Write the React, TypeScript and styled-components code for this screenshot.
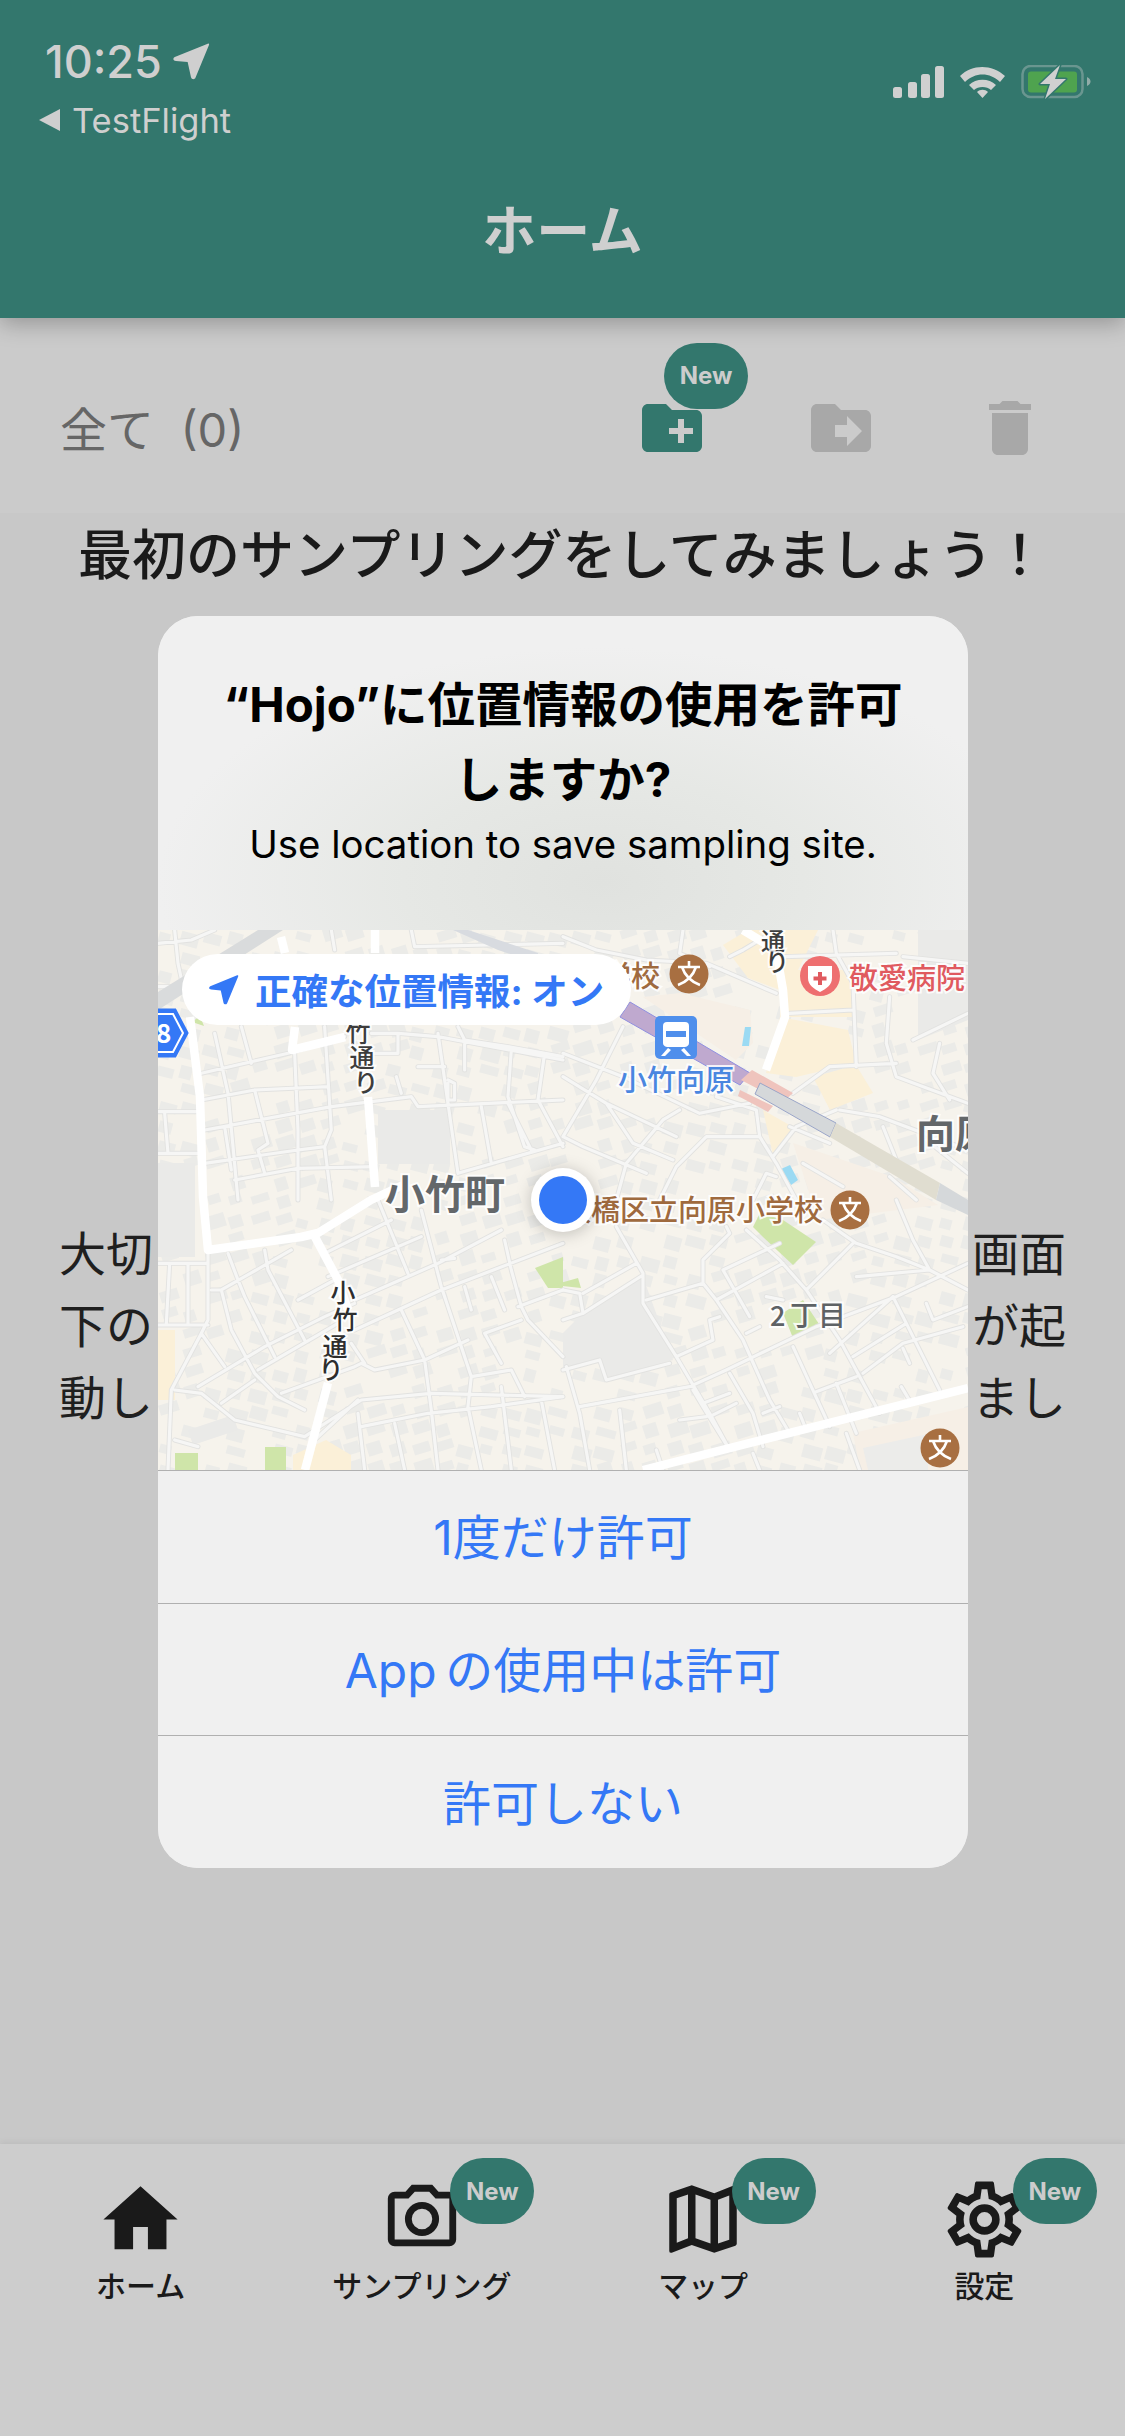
import React from 'react';
import styled, { createGlobalStyle } from 'styled-components';

const GREEN = '#33776d';
const BLUE = '#3478f6';
const BROWN = '#a86f41';

const GlobalStyle = createGlobalStyle`
  html, body {
    margin: 0;
    padding: 0;
    background: #c8c8c8;
  }
  * {
    box-sizing: border-box;
  }
`;

const Page = styled.div`
  position: relative;
  display: flex;
  flex-direction: column;
  width: 1125px;
  height: 2436px;
  overflow: hidden;
  background: #c8c8c8;
  font-family: Inter, 'Noto Sans CJK JP', sans-serif;
`;

const Header = styled.header`
  position: relative;
  z-index: 2;
  flex: none;
  height: 318px;
  background: ${GREEN};
  color: #cfcfcf;
  box-shadow: 0 5px 22px rgba(0, 0, 0, 0.28);
`;

const StatusRow = styled.div`
  display: flex;
  justify-content: space-between;
  height: 197px;
  padding: 36px 34px 0 38px;
`;

const Clock = styled.div`
  display: flex;
  align-items: center;
  gap: 10px;
  height: 50px;
  padding-left: 7px;
  font-size: 45px;
  font-weight: 500;
`;

const BackLink = styled.div`
  display: flex;
  align-items: center;
  gap: 12px;
  height: 40px;
  margin-top: 14px;
  font-size: 34.5px;
`;

const StatusIcons = styled.svg`
  margin-top: 29px;
`;

const HeaderTitle = styled.h1`
  margin: 0;
  font-size: 54px;
  font-weight: 600;
  line-height: 70px;
  text-align: center;
`;

const Toolbar = styled.div`
  flex: none;
  display: flex;
  align-items: center;
  justify-content: space-between;
  height: 195px;
  padding: 22px 79px 0 60px;
  background: #cbcbcb;
`;

const Count = styled.div`
  font-size: 47px;
  color: #666666;
  white-space: pre;
`;

const ToolIcons = styled.div`
  display: flex;
  gap: 97px;
  margin-top: 2px;
`;

const ToolButton = styled.div`
  position: relative;
  width: 72px;
  height: 72px;
`;

const Icon = styled.svg<{ $size: number; $color: string }>`
  display: block;
  width: ${(p) => p.$size}px;
  height: ${(p) => p.$size}px;
  fill: ${(p) => p.$color};
`;

const NewBadge = styled.span<{ $left: number; $top: number }>`
  position: absolute;
  left: ${(p) => p.$left}px;
  top: ${(p) => p.$top}px;
  display: flex;
  align-items: center;
  justify-content: center;
  width: 84px;
  height: 66px;
  border-radius: 33px;
  background: ${GREEN};
  color: #cccccc;
  font-size: 24px;
  font-weight: 700;
`;

const Main = styled.main`
  flex: 1;
`;

const Lead = styled.h2`
  margin: 0;
  padding-top: 11px;
  font-size: 54px;
  font-weight: 500;
  line-height: 64px;
  text-align: center;
  color: #1a1a1a;
`;

const Paragraph = styled.div`
  margin-top: 630px;
  padding: 0 59px;
  font-size: 47px;
  line-height: 72px;
  color: #1f1f1f;
`;

const ParagraphLine = styled.div`
  display: flex;
  justify-content: space-between;
`;

const TabBar = styled.nav`
  flex: none;
  display: grid;
  grid-template-columns: repeat(4, 1fr);
  height: 292px;
  padding-top: 30px;
  background: #cdcdcd;
  box-shadow: 0 -2px 6px rgba(0, 0, 0, 0.06);
`;

const TabItem = styled.div`
  position: relative;
  display: flex;
  flex-direction: column;
  align-items: center;
  margin-top: -30px;
  padding-top: 30px;
`;

const TabIconBox = styled.div`
  display: flex;
  align-items: center;
  justify-content: center;
  height: 90px;
`;

const TabLabel = styled.span`
  margin-top: 4px;
  font-size: 30px;
  font-weight: 500;
  line-height: 36px;
  color: #1a1a1a;
`;

const Dialog = styled.section`
  position: absolute;
  z-index: 3;
  left: 158px;
  top: 616px;
  display: flex;
  flex-direction: column;
  width: 810px;
  height: 1252px;
  overflow: hidden;
  border-radius: 40px;
  background: #f0f0f0;
`;

const DialogHead = styled.div`
  flex: none;
  height: 314px;
  padding-top: 51px;
  text-align: center;
  background: radial-gradient(ellipse 55% 75% at 55% 85%, #e0e2df 0%, #e6e8e5 45%, #f0f0f0 100%);
`;

const DialogTitle = styled.div`
  font-size: 47.5px;
  font-weight: 700;
  line-height: 75px;
  color: #000000;
`;

const DialogText = styled.div`
  margin-top: 2px;
  font-size: 38.4px;
  line-height: 50px;
  color: #000000;
`;

const MapFrame = styled.div`
  position: relative;
  flex: none;
  height: 540px;
  background: #f6f3ec;
`;

const MapSvg = styled.svg`
  display: block;
`;

const MapLabel = styled.text<{ $size: number; $color: string; $weight?: number }>`
  font-family: 'Noto Sans CJK JP', sans-serif;
  font-size: ${(p) => p.$size}px;
  font-weight: ${(p) => p.$weight ?? 500};
  fill: ${(p) => p.$color};
  stroke: rgba(255, 255, 255, 0.85);
  stroke-width: 4px;
  paint-order: stroke;
`;

const LocationHalo = styled.circle`
  fill: #ffffff;
  filter: drop-shadow(0 2px 8px rgba(0, 0, 0, 0.22));
`;

const AccuracyPill = styled.div`
  position: absolute;
  left: 24px;
  top: 24px;
  display: flex;
  align-items: center;
  gap: 16px;
  width: 449px;
  height: 71px;
  padding-left: 26px;
  border-radius: 36px;
  background: #ffffff;
  color: ${BLUE};
  font-size: 36.5px;
  font-weight: 700;
  white-space: pre;
`;

const DialogButton = styled.button`
  flex: 1;
  border: none;
  border-top: 1.5px solid #b0b0b0;
  background: #f0f0f0;
  color: ${BLUE};
  font-family: inherit;
  font-size: 48px;
  font-weight: 400;
  padding: 0 0 5px;
`;

// map drawing: street centre lines per quadrant, in 3x coordinates of that quadrant
const streets: { x: number; y: number; d: string }[] = [
  {
    x: 0,
    y: 0,
    d: 'M50 0L60 100L75 170M0 170L70 170M0 40L100 30L170 0M130 430L390 370L560 320M170 310L210 490L240 810M250 290L280 400M130 510L290 480L510 470M290 480L330 640L300 660L320 730M140 600L520 530L760 500L780 530L1215 510M410 370L420 600L420 810M500 290L520 600L500 650L520 810M640 310L720 310L720 370L640 370M720 310L840 320L1215 390M840 310L870 520L900 730M900 290L920 330L1050 350L1215 380M1060 360L1050 500L1100 650L1130 660M1160 370L1140 510L1215 650M780 410L860 410M715 440L730 490M870 450L890 460L890 510L870 510L870 460M970 530L1000 700M140 700L420 660L500 650M230 750L420 715L650 710M0 670L120 670M0 545L120 545M20 550L30 670M140 600L200 590L220 720M900 730L1215 640M1050 520L1120 660M920 340L920 420M520 0L530 60M760 0L770 50L1215 40',
  },
  {
    x: 405,
    y: 0,
    d: 'M0 20L100 60L250 90L430 100L640 190M360 0L350 70L440 110M640 0L540 60L500 80M660 80L1000 70M810 0L820 70L870 160L880 410M680 250L870 240M980 200L970 340L1000 440L1215 520M1130 340L1110 430L1160 510M0 370L180 440L410 550L560 520M180 290L100 450L0 620M0 440L130 520L340 620M130 520L210 640L330 690M350 540L300 570L190 700L160 810M460 500L580 540L590 620L640 700L700 810M590 620L430 620L340 710L290 810M690 490L800 410L1000 400M630 680L700 590L820 540M830 540L950 560L1215 660M1215 100L1020 80M680 590L800 640M960 590L1000 690M1090 630L1215 730M0 620L60 650L250 730M980 740L1060 810M720 700L840 770M570 810L610 730L640 740M1215 250L1050 330',
  },
  {
    x: 0,
    y: 270,
    d: 'M150 150L150 360L130 400L40 570L30 810M0 190L150 190M35 190L25 370M90 190L90 370M0 375L150 375M210 160L240 240L260 290L350 470M190 270L260 230L400 150M160 270L190 270L220 390L290 520L360 590L440 630M320 150L330 210L440 420M500 160L700 60M510 230L790 110M590 300L840 190L1030 90M420 300L530 240M590 390L850 270L1215 130M120 560L320 440L500 350L590 310M300 510L540 370M190 610L290 540M370 580L590 500L610 490L650 510L800 480L930 420M50 570L130 580L230 660L440 710L610 600L820 580L1215 590M600 640L620 810M610 680L810 640L1000 620L1215 590M710 670L740 810M800 480L820 630L840 810M730 330L800 480M660 0L750 220M790 30L850 260L940 530L930 620L970 810M940 530L1060 510L1100 590M1000 230L1040 330M920 260L940 330M1040 120L1060 210L1090 320L1110 360L1215 470M1080 320L1215 270M1090 360L980 400L1030 490M1030 560L1060 810M1150 600L1190 810M130 400L200 500M580 430L620 490M470 720L600 600M50 720L120 740M850 180L890 175',
  },
  {
    x: 405,
    y: 270,
    d: 'M160 80L240 220L240 310L340 470L440 640L500 750M0 270L50 280L60 340L0 360M60 280L220 190M60 340L240 225M250 300L420 250L460 300L540 420L620 600L680 700M420 250L420 180L500 100L490 80M480 210L650 130M480 210L560 350M460 300L660 190M550 90L650 180L730 270L830 420L950 640M340 470L450 420L440 360L470 350M0 510L110 480L130 540L320 490M50 620L380 560L490 510L760 380L1000 290L1215 190M170 630L190 810M10 500L50 640L80 810M390 570L420 620L500 750M420 610L500 580M440 650L520 610M350 660L430 650M500 520L570 640L600 740M690 440L800 680M800 460L990 290M870 470L1030 370M900 520L1020 430L1200 380M990 290L1080 470L1130 570M760 575L880 530M820 550L880 700M780 60L880 130L1000 170L1100 210L1215 270M880 230L1100 210M730 270L870 130M1000 0L1050 120L1100 210M1090 310L1110 360L1215 320M1020 445L1040 490M1015 560L1045 610M710 640L730 690M610 290L660 300M550 400L590 380M850 700L890 810M280 750L300 810M570 760L590 810M600 640L650 620',
  },
];

const buildingPath = () => {
  let seed = 4242;
  const rand = () => {
    seed = (seed * 1664525 + 1013904223) % 4294967296;
    return seed / 4294967296;
  };
  let d = '';
  for (let y = 0; y < 540; y += 19) {
    for (let x = 0; x < 810; x += 23) {
      if (rand() < 0.22) continue;
      const w = 11 + rand() * 9;
      const h = 8 + rand() * 6;
      const a = (x + y * 0.6) % 300 < 150 ? 0.26 : -0.3;
      const px = x + rand() * 3;
      const py = y + rand() * 3;
      const c = Math.cos(a);
      const s = Math.sin(a);
      d += `M${px.toFixed(1)} ${py.toFixed(1)}l${(w * c).toFixed(1)} ${(w * s).toFixed(1)}l${(-h * s).toFixed(1)} ${(h * c).toFixed(1)}l${(-w * c).toFixed(1)} ${(-w * s).toFixed(1)}z`;
    }
  }
  return d;
};

const SchoolMark = ({ x, y }: { x: number; y: number }) => (
  <g>
    <circle cx={x} cy={y} r={19.5} fill={BROWN} />
    <g transform={`translate(${x} ${y})`} stroke="#fff" strokeWidth={2.6} fill="none">
      <path d="M-11 -7H11M0 -13V-7M-7 -7C-4 2 3 8 11 11M7 -7C4 2 -3 8 -11 11" />
    </g>
  </g>
);

const MapArt = () => (
  <MapSvg width={810} height={540} viewBox="0 0 810 540">
    <rect width={810} height={540} fill="#f6f3ec" />
    <path d={buildingPath()} fill="#ebebe8" />
    {/* larger buildings */}
    <g fill="#eaeae8">
      <path d="M0 233H37V327H0z" />
      <path d="M220 180H292V234H220z" />
      <path d="M425 383L485 347L515 430L448 450L442 430L405 440V403z" />
      <path d="M760 0H810V90L760 110z" />
      <path d="M30 500L75 485L80 500L35 515z" />
    </g>
    {/* shopping areas */}
    <g fill="#fbf0d8">
      <path d="M565 15L590 0H660L640 40L622 60L590 48z" />
      <path d="M622 40H695V87L622 87z" />
      <path d="M622 87L690 100L698 133L638 147L608 143z" />
      <path d="M655 147L698 135L715 163L672 180z" />
      <path d="M605 180L635 197L615 225z" />
      <path d="M0 400H17V470H0z" />
      <path d="M135 525L168 510L193 525V540H135z" />
    </g>
    <g fill="#f6efe6">
      <path d="M485 67L522 63L592 80L595 113L578 130z" />
      <path d="M635 213L735 247L780 275L660 290z" />
      <path d="M695 503L810 477V540H702z" />
    </g>
    <path d="M705 518L770 504V540H710z" fill="#ececea" />
    <g fill="#cfe5a9">
      <path d="M377 338L405 327V358L390 358z" />
      <path d="M595 297L602 283L625 290L658 312L635 335L605 307z" />
      <path d="M625 383L645 370L663 397L635 408z" />
      <path d="M17 523H40V540H17zM107 517H128V540H107z" />
      <path d="M34 92L42 86L46 96z" />
      <path d="M395 355L420 348L423 358z" />
    </g>
    <g fill="#9bdaf3">
      <path d="M587 97H593L591 116H584z" />
      <path d="M623 239L632 235L640 250L633 255z" />
    </g>
    {streets.map((s) => (
      <g key={s.x + '-' + s.y} transform={`translate(${s.x} ${s.y}) scale(0.3333)`} fill="none" strokeLinejoin="round" strokeLinecap="round">
        <path d={s.d} stroke="#e2e2e0" strokeWidth={15} />
      </g>
    ))}
    {streets.map((s) => (
      <g key={s.x + ':' + s.y} transform={`translate(${s.x} ${s.y}) scale(0.3333)`} fill="none" strokeLinejoin="round" strokeLinecap="round">
        <path d={s.d} stroke="#f6f6f5" strokeWidth={9.5} />
      </g>
    ))}
    {/* railway */}
    <path d="M0 80L125 0H100L0 62z" fill="#d9dbdc" />
    <path d="M310 0L380 23V33L340 20L295 0z" fill="#d8dbe0" />
    <path d="M472 72L592 143L582 155L462 87z" fill="#bfa9cf" stroke="#8f8fe0" strokeWidth={1} />
    <path d="M594 140L635 163L625 172L583 150zM582 160L615 176L610 182L580 166z" fill="#efc4bd" />
    <path d="M602 153L678 193L672 207L597 164z" fill="#d5d8da" stroke="#9aa5c8" strokeWidth={1} />
    <path d="M678 193L782 253L778 270L672 207z" fill="#e0ddd0" />
    <path d="M782 253L810 270V285L778 270z" fill="#d5d8da" />
    {/* main roads */}
    <g fill="none" stroke="#ffffff" strokeWidth={8.5} strokeLinejoin="round">
      <path d="M32 87L42 167L45 267L50 320L143 307L160 303L213 270L245 255" />
      <path d="M210 167L217 257" />
      <path d="M137 97L134 120L187 107" />
      <path d="M123 7L127 23M217 0V23" />
      <path d="M157 307L180 350L190 380" />
      <path d="M170 453L147 540" />
      <path d="M585 0L618 20L625 60L627 87L608 140" />
      <path d="M485 540L810 458" />
    </g>
    {/* route shield */}
    <path d="M-12 80H17L29 103L17 126H-12z" fill={BLUE} stroke={BLUE} strokeWidth={3} />
    <path d="M-12 84H15L25 103L15 122H-12z" fill={BLUE} stroke="#fff" strokeWidth={2} />
    <MapLabel x={-2} y={113} $size={26} $color="#ffffff" $weight={700} style={{ stroke: 'none' }}>8</MapLabel>
    {/* places */}
    <MapLabel x={502} y={57} $size={29} $color="#9f6a3e" textAnchor="end">学校</MapLabel>
    <SchoolMark x={531} y={44} />
    <circle cx={662} cy={46} r={20} fill="#ee6f70" />
    <path d="M650 36H674V48C674 55 668 59 662 62C656 59 650 55 650 48z" fill="#ffffff" />
    <path d="M660 42H664V46.500H668.500V50.500H664V55H660V50.500H655.500V46.500H660z" fill="#e05a5f" />
    <MapLabel x={691} y={59} $size={29} $color="#e05a5f">敬愛病院</MapLabel>
    <rect x={497} y={86} width={42} height={43} rx={5} fill="#4f8fec" />
    <path d="M509 92H527Q531 92 531 96V113Q531 116 527 117H509Q505 116 505 113V96Q505 92 509 92z" fill="#ffffff" />
    <path d="M508 101H528V107H508z" fill="#4f8fec" />
    <path d="M510 118L503 126H507L513 120M526 118L533 126H529L523 120" fill="#ffffff" />
    <MapLabel x={518} y={161} $size={29} $color="#4a86e0" textAnchor="middle">小竹向原</MapLabel>
    <MapLabel x={758} y={218} $size={39} $color="#63676a" $weight={700}>向原</MapLabel>
    <MapLabel x={227} y={279} $size={40} $color="#63676a" $weight={700}>小竹町</MapLabel>
    <MapLabel x={404} y={291} $size={29} $color="#9f6a3e">板橋区立向原小学校</MapLabel>
    <SchoolMark x={692} y={280} />
    <SchoolMark x={782} y={518} />
    <MapLabel x={612} y={396} $size={27} $color="#5e6265">2</MapLabel>
    <MapLabel x={632} y={396} $size={28} $color="#5e6265">丁目</MapLabel>
    <MapLabel x={200} y={112} $size={25} $color="#3d3d3d" textAnchor="middle">竹</MapLabel>
    <MapLabel x={204} y={137} $size={25} $color="#3d3d3d" textAnchor="middle">通</MapLabel>
    <MapLabel x={208} y={162} $size={25} $color="#3d3d3d" textAnchor="middle">り</MapLabel>
    <MapLabel x={185} y={372} $size={25} $color="#2e2e2e" textAnchor="middle">小</MapLabel>
    <MapLabel x={187} y={399} $size={25} $color="#2e2e2e" textAnchor="middle">竹</MapLabel>
    <MapLabel x={177} y={426} $size={25} $color="#2e2e2e" textAnchor="middle">通</MapLabel>
    <MapLabel x={173} y={449} $size={25} $color="#2e2e2e" textAnchor="middle">り</MapLabel>
    <MapLabel x={615} y={20} $size={24} $color="#3d3d3d" textAnchor="middle">通</MapLabel>
    <MapLabel x={619} y={41} $size={24} $color="#3d3d3d" textAnchor="middle">り</MapLabel>
    {/* current location */}
    <LocationHalo cx={405} cy={270} r={32} />
    <circle cx={405} cy={270} r={24} fill={BLUE} />
  </MapSvg>
);

const ArrowGlyph = ({ size, color }: { size: number; color: string }) => (
  <svg width={size} height={size} viewBox="0 0 34 34">
    <path
      d="M32 1.500L2.500 13.500C0.500 14.500 1 17 3.500 17L14 18L17 31.500C17.500 33.500 20 34 21 32L33 3C33.500 1.800 33 1 32 1.500z"
      fill={color}
    />
  </svg>
);

const BadgeNew = ({ left, top }: { left: number; top: number }) => (
  <NewBadge $left={left} $top={top}>New</NewBadge>
);

const tabs = [
  {
    label: 'ホーム',
    size: 89,
    d: 'M10 20v-6h4v6h5v-8h3L12 3 2 12h3v8z',
  },
  {
    label: 'サンプリング',
    size: 82,
    badge: true,
    d: 'M20,4H16.83L15,2H9L7.17,4H4A2,2 0 0,0 2,6V18A2,2 0 0,0 4,20H20A2,2 0 0,0 22,18V6A2,2 0 0,0 20,4M20,18H4V6H8.05L9.88,4H14.12L15.95,6H20V18M12,7A5,5 0 0,0 7,12A5,5 0 0,0 12,17A5,5 0 0,0 17,12A5,5 0 0,0 12,7M12,15A3,3 0 0,1 9,12A3,3 0 0,1 12,9A3,3 0 0,1 15,12A3,3 0 0,1 12,15Z',
  },
  {
    label: 'マップ',
    size: 90,
    badge: true,
    d: 'M20.5,3L20.34,3.03L15,5.1L9,3L3.36,4.9C3.15,4.97 3,5.15 3,5.38V20.5A0.5,0.5 0 0,0 3.5,21L3.66,20.97L9,18.9L15,21L20.64,19.1C20.85,19.03 21,18.85 21,18.62V3.5A0.5,0.5 0 0,0 20.5,3M10,5.47L14,6.87V18.53L10,17.13V5.47M5,6.46L8,5.45V17.15L5,18.31V6.46M19,17.54L16,18.55V6.86L19,5.7V17.54Z',
  },
  {
    label: '設定',
    size: 91,
    badge: true,
    d: 'M12,8A4,4 0 0,1 16,12A4,4 0 0,1 12,16A4,4 0 0,1 8,12A4,4 0 0,1 12,8M12,10A2,2 0 0,0 10,12A2,2 0 0,0 12,14A2,2 0 0,0 14,12A2,2 0 0,0 12,10M10,22C9.75,22 9.54,21.82 9.5,21.58L9.13,18.93C8.5,18.68 7.96,18.34 7.44,17.94L4.95,18.95C4.73,19.03 4.46,18.95 4.34,18.73L2.34,15.27C2.21,15.05 2.27,14.78 2.46,14.63L4.57,12.97L4.5,12L4.57,11L2.46,9.37C2.27,9.22 2.21,8.95 2.34,8.73L4.34,5.27C4.46,5.05 4.73,4.96 4.95,5.05L7.44,6.05C7.96,5.66 8.5,5.32 9.13,5.07L9.5,2.42C9.54,2.18 9.75,2 10,2H14C14.25,2 14.46,2.18 14.5,2.42L14.87,5.07C15.5,5.32 16.04,5.66 16.56,6.05L19.05,5.05C19.27,4.96 19.54,5.05 19.66,5.27L21.66,8.73C21.79,8.95 21.73,9.22 21.54,9.37L19.43,11L19.5,12L19.43,13L21.54,14.63C21.73,14.78 21.79,15.05 21.66,15.27L19.66,18.73C19.54,18.95 19.27,19.04 19.05,18.95L16.56,17.95C16.04,18.34 15.5,18.68 14.87,18.93L14.5,21.58C14.46,21.82 14.25,22 14,22H10M11.25,4L10.88,6.61C9.68,6.86 8.62,7.5 7.85,8.39L5.44,7.35L4.69,8.65L6.8,10.2C6.4,11.37 6.4,12.64 6.8,13.8L4.68,15.36L5.43,16.66L7.86,15.62C8.63,16.5 9.68,17.14 10.87,17.38L11.24,20H12.76L13.13,17.39C14.32,17.14 15.37,16.5 16.14,15.62L18.57,16.66L19.32,15.36L17.2,13.81C17.6,12.64 17.6,11.37 17.2,10.2L19.31,8.65L18.56,7.35L16.15,8.39C15.38,7.5 14.32,6.86 13.12,6.62L12.75,4H11.25Z',
  },
];

const paragraphLines = [
  ['大切', '画面'],
  ['下の', 'が起'],
  ['動し', 'まし'],
];

export default function App() {
  return (
    <Page>
      <GlobalStyle />
      <Header>
        <StatusRow>
          <div>
            <Clock>
              10:25
              <ArrowGlyph size={38} color="#cfcfcf" />
            </Clock>
            <BackLink>
              <svg width={22} height={22} viewBox="0 0 22 22">
                <path d="M22 0V22L1 11z" fill="#cfcfcf" />
              </svg>
              TestFlight
            </BackLink>
          </div>
          <StatusIcons width={198} height={34} viewBox="0 0 198 34">
            <g fill="#d0d0d0">
              <rect x={0} y={22} width={9} height={11} rx={2.5} />
              <rect x={15} y={17} width={9} height={16} rx={2.5} />
              <rect x={28} y={9} width={9} height={24} rx={2.5} />
              <rect x={42} y={1} width={9} height={32} rx={2.5} />
              <path d="M67 11C79 -1 99 -1 112 11L107 17C97 7 82 7 72 17z" />
              <path d="M76 20C83 13 96 13 103 20L98 25C94 21 85 21 81 25z" />
              <path d="M84 27C87 24 92 24 95 27L89.500 33z" />
            </g>
            <rect x={129.500} y={1} width={60} height={31} rx={8} fill="none" stroke="#d0d0d0" strokeOpacity={0.35} strokeWidth={2.5} />
            <rect x={135} y={6.500} width={49} height={21} rx={3} fill="#4fa34f" />
            <path d="M194 12C196.500 13 197.500 15 197.500 16.500C197.500 18 196.500 20 194 21z" fill="#d0d0d0" fillOpacity={0.6} />
            <path d="M167 0L147 19H157L152 34L173 14H162z" fill="#d0d0d0" stroke={GREEN} strokeWidth={3} strokeLinejoin="round" paintOrder="stroke" />
          </StatusIcons>
        </StatusRow>
        <HeaderTitle>ホーム</HeaderTitle>
      </Header>

      <Toolbar>
        <Count>全て  (0)</Count>
        <ToolIcons>
          <ToolButton>
            <Icon $size={72} $color={GREEN} viewBox="0 0 24 24">
              <path d="M20 6h-8l-2-2H4c-1.11 0-1.99.89-1.99 2L2 18c0 1.11.89 2 2 2h16c1.11 0 2-.89 2-2V8c0-1.11-.89-2-2-2zm-1 8h-3v3h-2v-3h-3v-2h3V9h2v3h3v2z" />
            </Icon>
            <BadgeNew left={28} top={-49} />
          </ToolButton>
          <ToolButton>
            <Icon $size={72} $color="#a8a8a8" viewBox="0 0 24 24">
              <path d="M20 6h-8l-2-2H4c-1.1 0-1.99.9-1.99 2L2 18c0 1.1.9 2 2 2h16c1.1 0 2-.9 2-2V8c0-1.1-.9-2-2-2zm-6 12v-3h-4v-4h4V8l5 5-5 5z" />
            </Icon>
          </ToolButton>
          <ToolButton>
            <Icon $size={72} $color="#a8a8a8" viewBox="0 0 24 24">
              <path d="M6 19c0 1.100.9 2 2 2h8c1.100 0 2-.9 2-2V7H6v12zM19 4h-3.500l-1-1h-5l-1 1H5v2h14V4z" />
            </Icon>
          </ToolButton>
        </ToolIcons>
      </Toolbar>

      <Main>
        <Lead>最初のサンプリングをしてみましょう！</Lead>
        <Paragraph>
          {paragraphLines.map(([left, right]) => (
            <ParagraphLine key={left}>
              <span>{left}</span>
              <span>{right}</span>
            </ParagraphLine>
          ))}
        </Paragraph>
      </Main>

      <TabBar>
        {tabs.map((tab) => (
          <TabItem key={tab.label}>
            <TabIconBox>
              <Icon $size={tab.size} $color="#1a1a1a" viewBox="0 0 24 24">
                <path d={tab.d} />
              </Icon>
            </TabIconBox>
            <TabLabel>{tab.label}</TabLabel>
            {tab.badge && <BadgeNew left={169} top={14} />}
          </TabItem>
        ))}
      </TabBar>

      <Dialog>
        <DialogHead>
          <DialogTitle>
            “Hojo”に位置情報の使用を許可
            <br />
            しますか?
          </DialogTitle>
          <DialogText>Use location to save sampling site.</DialogText>
        </DialogHead>
        <MapFrame>
          <MapArt />
          <AccuracyPill>
            <ArrowGlyph size={31} color={BLUE} />
            正確な位置情報: オン
          </AccuracyPill>
        </MapFrame>
        <DialogButton>1度だけ許可</DialogButton>
        <DialogButton>App{'\u2009'}の使用中は許可</DialogButton>
        <DialogButton>許可しない</DialogButton>
      </Dialog>
    </Page>
  );
}
